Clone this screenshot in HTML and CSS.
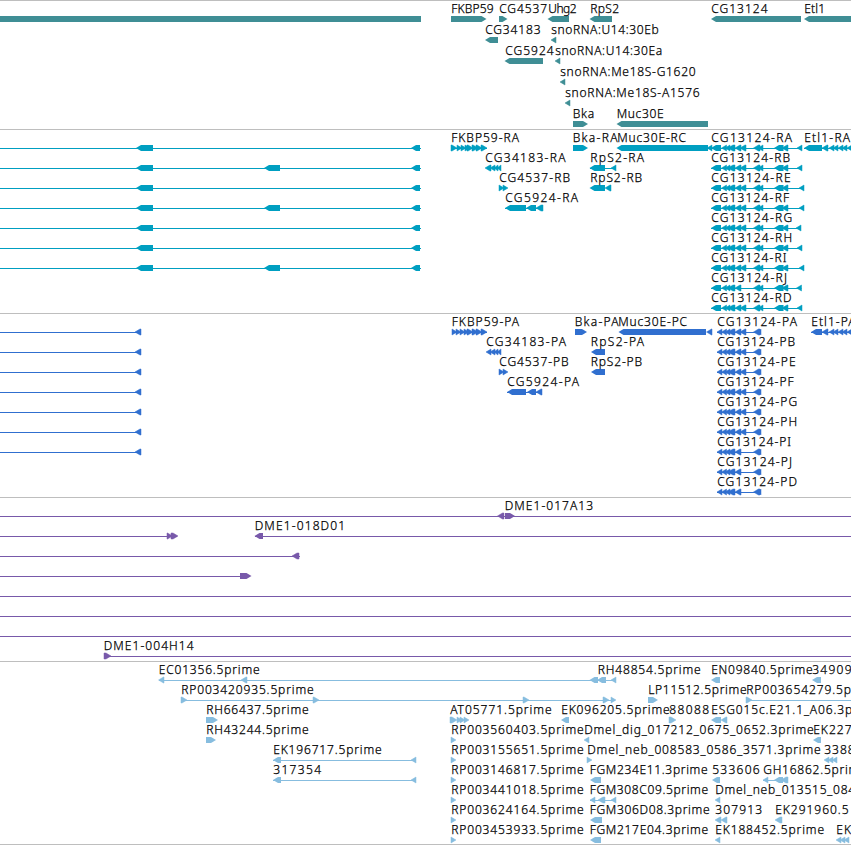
FILE: index.html
```html
<!DOCTYPE html>
<html lang="en">
<head>
    <meta charset="UTF-8">
    <meta name="viewport" content="width=device-width, initial-scale=1.0">
    <title>Genome Tracks</title>
    <link rel="stylesheet" href="styles.css">
</head>
<body>
    <main class="browser">
        <section class="track genes" id="genes"></section>
        <section class="track transcripts" id="transcripts"></section>
        <section class="track proteins" id="proteins"></section>
        <section class="track clones" id="clones"></section>
        <section class="track ests" id="ests"></section>
    </main>
    <script src="tracks.js"></script>
</body>
</html>
```

FILE: styles.css
```css
body {
    margin: 0;
    background-color: white;
    overflow: hidden;
}
.browser {
    display: flex;
    flex-direction: column;
    width: 851px;
    border-bottom: 1px solid #bebebe;
}
.track {
    box-sizing: border-box;
    border-top: 1px solid #bebebe;
    overflow: hidden;
}
.track svg {
    display: block;
    width: 851px;
    height: 100%;
}
.genes {
    height: 129px;
    color: #3f8e95;
}
.transcripts {
    height: 184px;
    color: #009fc1;
}
.proteins {
    height: 184px;
    color: #306fcf;
}
.clones {
    height: 164px;
    color: #7859aa;
}
.ests {
    height: 183px;
    color: #87bddf;
}
.feature {
    fill: currentColor;
}
.small {
    stroke: currentColor;
    stroke-width: 0.5px;
}
.label {
    font-family: "Noto Sans", "Open Sans", sans-serif;
    font-size: 12px;
    font-weight: 300;
    fill: black;
    stroke: black;
    stroke-width: 0.25px;
}
```

FILE: tracks.js
```js
const SVG = "http://www.w3.org/2000/svg";

// label: [text, start, end]   line / left / right: [start, end]
const genes = [
    {
        labels: [["FKBP59", 451, 494], ["CG4537", 499, 547.5], ["Uhg2", 548, 577], ["RpS2", 590, 619.5], ["CG13124", 711, 768], ["Etl1", 804, 825.5]],
        left: [[-10, 421], [547.5, 569], [589.5, 612], [711, 801], [804, 870]],
        right: [[451, 486.5], [499, 507.5]]
    },
    { labels: [["CG34183", 485, 541], ["snoRNA:U14:30Eb", 551, 659]], left: [[485, 498], [551, 556]] },
    { labels: [["CG5924", 505, 554], ["snoRNA:U14:30Ea", 555, 662.5]], left: [[504.5, 543], [555, 560]] },
    { labels: [["snoRNA:Me18S-G1620", 560, 696]], left: [[560, 565]] },
    { labels: [["snoRNA:Me18S-A1576", 565, 700]], left: [[565, 570]] },
    { labels: [["Bka", 572.5, 594.5], ["Muc30E", 616.5, 664]], left: [[616.5, 708]], right: [[573, 588]] }
];

const transcripts = [
    {
        labels: [["FKBP59-RA", 451, 519.5], ["Bka-RA", 572.5, 618], ["Muc30E-RC", 617, 686.5], ["Etl1-RA", 804, 850.5]],
        lines: [[451, 487], [707, 712], [804, 851]],
        left: [[616.5, 708], [707, 712], [804, 822], [822, 828], [829, 834], [833, 838], [838, 843], [842, 847], [847, 853]],
        right: [[451, 457], [457, 462], [461, 466], [465, 470], [467, 473], [472, 478], [476, 482], [481, 487], [573, 588]]
    },
    {
        labels: [["CG34183-RA", 485, 566], ["RpS2-RA", 590, 644.5]],
        lines: [[590, 615]],
        left: [[485, 491], [490, 495], [494, 498], [497, 501], [589.5, 605], [611, 616]]
    },
    { labels: [["CG4537-RB", 499, 570.5], ["RpS2-RB", 590, 642.5]], left: [[589.5, 605], [605, 611]], right: [[499, 504], [503, 508]] },
    { labels: [["CG5924-RA", 505, 578.5]], lines: [[505, 543]], left: [[505, 526], [526, 536], [536, 543]] },
    {}, {}, {}, {}, {}
];

const proteins = [
    {
        labels: [["FKBP59-PA", 451.5, 519.5], ["Bka-PA", 574.5, 619], ["Muc30E-PC", 618, 687.5], ["Etl1-PA", 811, 856]],
        lines: [[452, 487], [811, 851]],
        left: [[618.5, 706], [706.5, 712], [811, 822], [822, 828], [829, 834], [833, 838], [838, 843], [842, 847], [847, 853]],
        right: [[452, 457], [456, 461], [460, 465], [464, 469], [467, 473], [472, 478], [476, 482], [481, 487], [575, 587]]
    },
    { labels: [["CG34183-PA", 486, 566.5], ["RpS2-PA", 590.5, 644.5]], left: [[486, 491], [490, 495], [494, 498], [497, 501], [591, 605]] },
    { labels: [["CG4537-PB", 499, 569], ["RpS2-PB", 590.5, 642.5]], left: [[591, 605]], right: [[499, 504], [503, 508]] },
    { labels: [["CG5924-PA", 507, 579.5]], lines: [[507, 542]], left: [[507, 526], [527, 536], [536, 542]] },
    {}, {}, {}, {}, {}
];

const clones = [
    { labels: [["DME1-017A13", 504.5, 593.5]], lines: [[0, 851]], left: [[497.5, 504]], right: [[505, 515]] },
    { labels: [["DME1-018D01", 254.5, 345.5]], lines: [[0, 177], [255, 851]], left: [[254.5, 263]], right: [[167, 172.5], [171, 178]] },
    { lines: [[0, 300]], left: [[292, 299]] },
    { lines: [[0, 250]], right: [[240, 251.5]] },
    { lines: [[0, 851]] },
    { lines: [[0, 851]] },
    { lines: [[0, 851]] },
    { labels: [["DME1-004H14", 103.5, 194]], lines: [[104, 851]], right: [[104, 111]] }
];

const ests = [
    {
        labels: [["EC01356.5prime", 158.5, 260], ["RH48854.5prime", 597.5, 701], ["EN09840.5prime", 711, 813], ["34909", 812, 852]],
        lines: [[159, 615]],
        left: [[158.5, 164], [241, 247], [589.5, 598], [597, 606], [611, 616], [711, 720], [812, 821]]
    },
    {
        labels: [["RP003420935.5prime", 181, 314], ["LP11512.5prime", 648, 747], ["RP003654279.5prime", 746, 880]],
        lines: [[181, 615], [746, 851]],
        right: [[181, 187], [313, 319], [523, 529], [603, 609], [611, 616], [648, 658], [746, 752]]
    },
    {
        labels: [["RH66437.5prime", 206, 309], ["AT05771.5prime", 450, 552], ["EK096205.5prime", 561, 670], ["88088", 669, 709.5], ["ESG015c.E21.1_A06.3prime", 711, 881]],
        left: [[561, 569], [711, 721], [721, 727]],
        right: [[206, 218], [450, 457], [457, 462], [460, 465], [464, 469], [669, 676]]
    },
    {
        labels: [["RH43244.5prime", 206, 309], ["RP003560403.5prime", 451, 584], ["Dmel_dig_017212_0675_0652.3prime", 584, 814], ["EK227", 813, 852]],
        left: [[584, 589], [813, 821]],
        right: [[206, 216], [451, 456]]
    },
    {
        labels: [["EK196717.5prime", 273, 382], ["RP003155651.5prime", 451, 584], ["Dmel_neb_008583_0586_3571.3prime", 587, 821], ["3388", 824, 855]],
        lines: [[273, 415]],
        left: [[273, 281], [411, 416], [824, 829], [828, 833], [832, 837]],
        right: [[451, 456], [587, 592]]
    },
    {
        labels: [["317354", 273, 321.5], ["RP003146817.5prime", 451, 584], ["FGM234E11.3prime", 589.5, 708], ["533606", 712, 760], ["GH16862.5prime", 763, 867]],
        lines: [[273, 415], [763, 787]],
        left: [[273, 281], [411, 416], [590, 601], [712, 720], [763, 768], [774, 783], [781, 788]],
        right: [[451, 456]]
    },
    {
        labels: [["RP003441018.5prime", 451, 584], ["FGM308C09.5prime", 589.5, 708.5], ["Dmel_neb_013515_084", 715, 855.5]],
        lines: [[590, 615]],
        left: [[590, 595], [598, 605], [611, 616], [715, 720]],
        right: [[451, 456]]
    },
    {
        labels: [["RP003624164.5prime", 451, 584], ["FGM306D08.3prime", 589.5, 710], ["307913", 715, 762.5], ["EK291960.5", 775, 849]],
        left: [[590, 602], [715, 721], [721, 727], [775, 782]],
        right: [[451, 456]]
    },
    {
        labels: [["RP003453933.5prime", 451, 584], ["FGM217E04.3prime", 589.5, 708.5], ["EK188452.5prime", 715, 824.5], ["EK", 836, 851.5]],
        left: [[590, 601], [715, 720], [836, 841], [840, 845], [844, 849]],
        right: [[451, 456]]
    }
];

function add(row, key, items) {
    row[key] = (row[key] || []).concat(items);
}

// The long gene running in from the left side
for (let i = 0; i < 7; i++) {
    add(transcripts[i], "lines", [[0, 421]]);
    add(transcripts[i], "left", [[136, 153], [411, 420]]);
    add(proteins[i], "lines", [[0, 141]]);
    add(proteins[i], "left", [[135, 141]]);
}
// extra exon in three of the transcripts
[1, 3, 6].forEach(i => add(transcripts[i], "left", [[264, 280]]));

// CG13124 isoforms: [letter, transcript label end, last exon end, protein label end]
const isoforms = [
    ["A", 792.5, 802, 797.5], ["B", 790.5, 802, 795.5], ["E", 791, 804, 796],
    ["F", 789.5, 804, 794], ["G", 792.5, 801, 797.5], ["H", 792.5, 802, 797.5],
    ["I", 787, 804, 791.5], ["J", 787.5, 801.5, 792.5], ["D", 792, 802, 797.5]
];
isoforms.forEach(([letter, rEnd, exonEnd, pEnd], i) => {
    add(transcripts[i], "labels", [["CG13124-R" + letter, 711, rEnd]]);
    add(transcripts[i], "lines", [[711, exonEnd]]);
    add(transcripts[i], "left", [[711, 721], [721.5, 726.5], [725, 730], [728, 735], [735, 741], [753.5, 760], [758, 763], [774, 783.5], [782, 788], [exonEnd - 5, exonEnd]]);
    if (letter !== "J") add(transcripts[i], "left", [[740, 746]]);

    add(proteins[i], "labels", [["CG13124-P" + letter, 717, pEnd]]);
    add(proteins[i], "lines", [[717, 761]]);
    add(proteins[i], "left", [[717, 722], [721.5, 726.5], [725, 730], [728, 735], [735, 741], [753.5, 760], [758, 761]]);
    if (i < 6) add(proteins[i], "left", [[740, 746]]);
});

function element(name, attributes) {
    const node = document.createElementNS(SVG, name);
    for (const key in attributes) node.setAttribute(key, attributes[key]);
    return node;
}

function arrow(start, end, top, dir) {
    const head = Math.min(5, end - start);
    const mid = top + 3;
    const bottom = top + 6;
    const points = dir === "left"
        ? [[start, mid], [start + head, top], [end, top], [end, bottom], [start + head, bottom]]
        : [[end, mid], [end - head, top], [start, top], [start, bottom], [end - head, bottom]];
    const name = end - start <= 7 ? "feature small" : "feature";
    return element("polygon", { class: name, points: points.join(" ") });
}

function drawTrack(id, rows, pitch) {
    const svg = element("svg", {});
    rows.forEach((row, i) => {
        const top = i * pitch + 15;
        (row.lines || []).forEach(([a, b]) => {
            svg.append(element("rect", { class: "feature", x: a, y: top + 3, width: b - a, height: 1 }));
        });
        (row.left || []).forEach(([a, b]) => svg.append(arrow(a, b, top, "left")));
        (row.right || []).forEach(([a, b]) => svg.append(arrow(a, b, top, "right")));
        (row.labels || []).forEach(([text, a, b]) => {
            const label = element("text", { class: "label", x: a + 0.2, y: top - 3, textLength: b - a - 0.6 });
            label.textContent = text;
            svg.append(label);
        });
    });
    document.getElementById(id).append(svg);
}

drawTrack("genes", genes, 21);
drawTrack("transcripts", transcripts, 20);
drawTrack("proteins", proteins, 20);
drawTrack("clones", clones, 20);
drawTrack("ests", ests, 20);
```
